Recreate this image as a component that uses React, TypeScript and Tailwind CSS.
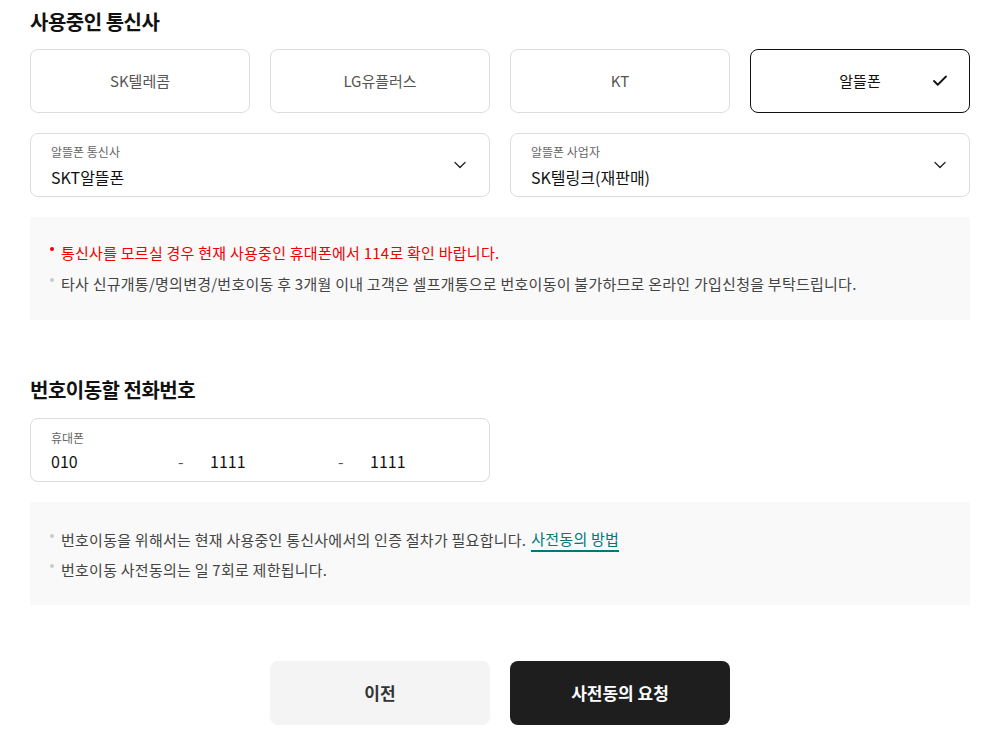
import { Check, ChevronDown } from "lucide-react";

const carriers = ["SK텔레콤", "LG유플러스", "KT", "알뜰폰"];
const selectedCarrier = "알뜰폰";

function SelectBox({ label, value }: { label: string; value: string }) {
    return (
        <div className="relative h-16 rounded-lg border border-[#dddddd] bg-white px-5 pt-[10px]">
            <div className="text-[12px] leading-4 text-[#666666]">{label}</div>
            <div className="mt-[5px] text-[16px] leading-6 text-[#111111]">{value}</div>
            <ChevronDown
                className="absolute right-[19px] top-1/2 h-5 w-5 -translate-y-1/2 text-[#222222]"
                strokeWidth={1.5}
            />
        </div>
    );
}

function Bullet({ red = false }: { red?: boolean }) {
    return (
        <span
            className={`mr-[7px] inline-block h-1 w-1 shrink-0 translate-y-[-4px] rounded-full ${
                red ? "bg-[#ee0000]" : "bg-[#cccccc]"
            }`}
        />
    );
}

export default function App() {
    return (
        <div
            className="h-[744px] overflow-hidden bg-white pl-[30px] pr-[22px] pt-2 text-[#111111]"
            style={{ fontFamily: '"Noto Sans CJK KR", "Noto Sans", sans-serif' }}
        >
            <h2 className="text-[20px] font-bold leading-7 tracking-[-0.5px]">사용중인 통신사</h2>

            <div className="mt-[13px] grid grid-cols-4 gap-5">
                {carriers.map((name) => {
                    const active = name === selectedCarrier;
                    return (
                        <button
                            key={name}
                            type="button"
                            className={`relative flex h-16 items-center justify-center rounded-lg border bg-white text-[15px] ${
                                active
                                    ? "border-[#111111] text-[#111111]"
                                    : "border-[#dddddd] text-[#555555]"
                            }`}
                        >
                            {name}
                            {active ? (
                                <Check
                                    className="absolute right-[20px] top-1/2 h-[18px] w-[18px] -translate-y-1/2"
                                    strokeWidth={2.4}
                                />
                            ) : null}
                        </button>
                    );
                })}
            </div>

            <div className="mt-5 grid grid-cols-2 gap-5">
                <SelectBox label="알뜰폰 통신사" value="SKT알뜰폰" />
                <SelectBox label="알뜰폰 사업자" value="SK텔링크(재판매)" />
            </div>

            <div className="mt-5 flex flex-col gap-[7px] bg-[#f9f9f9] px-5 pt-6 pb-6 text-[15px] leading-6 tracking-[0.25px]">
                <p className="flex items-center text-[#ee0000]">
                    <Bullet red />
                    통신사를 모르실 경우 현재 사용중인 휴대폰에서 114로 확인 바랍니다.
                </p>
                <p className="flex items-center text-[#444444]">
                    <Bullet />
                    타사 신규개통/명의변경/번호이동 후 3개월 이내 고객은 셀프개통으로 번호이동이 불가하므로 온라인 가입신청을 부탁드립니다.
                </p>
            </div>

            <h2 className="mt-14 text-[20px] font-bold leading-7 tracking-[-0.5px]">번호이동할 전화번호</h2>

            <div className="mt-[14px] grid grid-cols-2 gap-5">
                <div className="h-16 rounded-lg border border-[#dddddd] bg-white px-5 pt-[11px]">
                    <div className="text-[12px] leading-4 text-[#666666]">휴대폰</div>
                    <div className="mt-[3px] flex items-center text-[16px] leading-6 text-[#111111]">
                        <span className="w-[127px]">010</span>
                        <span className="w-8 text-[#555555]">-</span>
                        <span className="w-[128px]">1111</span>
                        <span className="w-8 text-[#555555]">-</span>
                        <span>1111</span>
                    </div>
                </div>
            </div>

            <div className="mt-5 flex flex-col gap-[6px] bg-[#f9f9f9] px-5 pt-[26px] pb-[23px] text-[15px] leading-6 tracking-[0.25px] text-[#444444]">
                <p className="flex items-center">
                    <Bullet />
                    번호이동을 위해서는 현재 사용중인 통신사에서의 인증 절차가 필요합니다.
                    <a className="ml-[5px] border-b-2 border-[#00787a] leading-[22px] text-[#00787a]">사전동의 방법</a>
                </p>
                <p className="flex items-center">
                    <Bullet />
                    번호이동 사전동의는 일 7회로 제한됩니다.
                </p>
            </div>

            <div className="mt-14 flex justify-center gap-5">
                <button
                    type="button"
                    className="h-16 w-[220px] rounded-lg bg-[#f4f4f4] text-[17px] font-bold text-[#333333]"
                >
                    이전
                </button>
                <button
                    type="button"
                    className="h-16 w-[220px] rounded-lg bg-[#1e1e1e] text-[17px] font-bold text-white"
                >
                    사전동의 요청
                </button>
            </div>
        </div>
    );
}
